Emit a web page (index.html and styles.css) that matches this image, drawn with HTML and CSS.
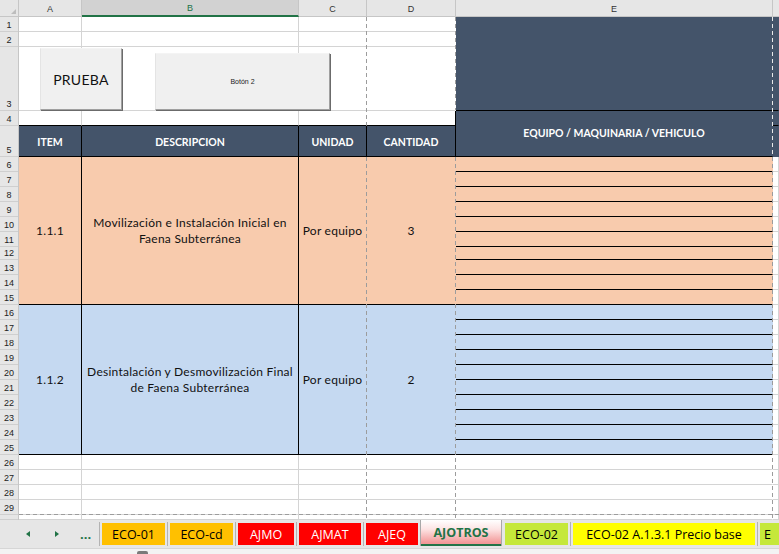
FILE: index.html
```html
<!DOCTYPE html>
<html lang="es">
<head>
<meta charset="utf-8">
<title>AJOTROS</title>
<link rel="stylesheet" href="styles.css">
</head>
<body>
<div class="app">
  <div class="colhead">
    <div class="corner"></div>
    <div class="ch w-a">A</div>
    <div class="ch w-b sel">B</div>
    <div class="ch w-c">C</div>
    <div class="ch w-d">D</div>
    <div class="ch w-e">E</div>
    <div class="ch w-f"></div>
  </div>
  <div class="body">
    <div class="rownums">
      <div class="rn">1</div><div class="rn">2</div><div class="rn">3</div><div class="rn">4</div><div class="rn">5</div>
      <div class="rn">6</div><div class="rn">7</div><div class="rn">8</div><div class="rn">9</div><div class="rn">10</div>
      <div class="rn">11</div><div class="rn">12</div><div class="rn">13</div><div class="rn">14</div><div class="rn">15</div>
      <div class="rn">16</div><div class="rn">17</div><div class="rn">18</div><div class="rn">19</div><div class="rn">20</div>
      <div class="rn">21</div><div class="rn">22</div><div class="rn">23</div><div class="rn">24</div><div class="rn">25</div>
      <div class="rn">26</div><div class="rn">27</div><div class="rn">28</div><div class="rn">29</div><div class="rn"></div>
    </div>
    <div class="grid">
      <!-- row 1 -->
      <div class="c"></div><div class="c"></div><div class="c nr"></div><div class="c nr"></div>
      <div class="c dk s3 bk-b"></div><div class="c dk s3 bk-b"></div>
      <!-- row 2 -->
      <div class="c"></div><div class="c"></div><div class="c nr"></div><div class="c nr"></div>
      <!-- row 3 -->
      <div class="c"></div><div class="c"></div><div class="c nr"></div><div class="c nr"></div>
      <!-- row 4 -->
      <div class="c bk-b"></div><div class="c bk-b"></div><div class="c nr bk-b"></div><div class="c bk-b bk-r"></div>
      <div class="c dk s2 bk-b eqhead">EQUIPO / MAQUINARIA / VEHICULO</div>
      <div class="c dk bk-b"></div>
      <!-- row 5 -->
      <div class="c hd">ITEM</div><div class="c hd">DESCRIPCION</div><div class="c hd">UNIDAD</div><div class="c hd">CANTIDAD</div>
      <div class="c dk"></div>
      <!-- rows 6-15 -->
      <div class="c pe s10 bk-r bk-b txt">1.1.1</div>
      <div class="c pe s10 bk-r bk-b txt desc">Movilización e Instalación Inicial en<br>Faena Subterránea</div>
      <div class="c pe s10 nr bk-b txt">Por equipo</div>
      <div class="c pe s10 nr bk-b txt">3</div>
      <div class="c pe nr bk-b"></div><div class="c"></div>
      <div class="c pe nr bk-b"></div><div class="c"></div>
      <div class="c pe nr bk-b"></div><div class="c"></div>
      <div class="c pe nr bk-b"></div><div class="c"></div>
      <div class="c pe nr bk-b"></div><div class="c"></div>
      <div class="c pe nr bk-b"></div><div class="c"></div>
      <div class="c pe nr bk-b"></div><div class="c"></div>
      <div class="c pe nr bk-b"></div><div class="c"></div>
      <div class="c pe nr bk-b"></div><div class="c"></div>
      <div class="c pe nr bk-b"></div><div class="c"></div>
      <!-- rows 16-25 -->
      <div class="c bl s10 bk-r bk-b txt">1.1.2</div>
      <div class="c bl s10 bk-r bk-b txt desc">Desintalación y Desmovilización Final<br>de Faena Subterránea</div>
      <div class="c bl s10 nr bk-b txt">Por equipo</div>
      <div class="c bl s10 nr bk-b txt">2</div>
      <div class="c bl nr bk-b"></div><div class="c"></div>
      <div class="c bl nr bk-b"></div><div class="c"></div>
      <div class="c bl nr bk-b"></div><div class="c"></div>
      <div class="c bl nr bk-b"></div><div class="c"></div>
      <div class="c bl nr bk-b"></div><div class="c"></div>
      <div class="c bl nr bk-b"></div><div class="c"></div>
      <div class="c bl nr bk-b"></div><div class="c"></div>
      <div class="c bl nr bk-b"></div><div class="c"></div>
      <div class="c bl nr bk-b"></div><div class="c"></div>
      <div class="c bl nr bk-b"></div><div class="c"></div>
      <!-- rows 26-30 -->
      <div class="c"></div><div class="c"></div><div class="c nr"></div><div class="c nr"></div><div class="c nr"></div><div class="c"></div>
      <div class="c"></div><div class="c"></div><div class="c nr"></div><div class="c nr"></div><div class="c nr"></div><div class="c"></div>
      <div class="c"></div><div class="c"></div><div class="c nr"></div><div class="c nr"></div><div class="c nr"></div><div class="c"></div>
      <div class="c"></div><div class="c"></div><div class="c nr"></div><div class="c nr"></div><div class="c nr"></div><div class="c"></div>
      <div class="c"></div><div class="c"></div><div class="c nr"></div><div class="c nr"></div><div class="c nr"></div><div class="c"></div>

      <!-- page break lines -->
      <div class="pb pb-c1"></div><div class="pb pb-c2"></div>
      <div class="pb pb-d1"></div><div class="pb pb-d2"></div>
      <div class="pb pb-e1"></div><div class="pb pb-e2"></div>
      <div class="pb pb-h"></div>

      <!-- form buttons -->
      <div class="btn btn-prueba">PRUEBA</div>
      <div class="btn btn-2">Botón 2</div>
    </div>
  </div>
  <div class="tabbar">
    <div class="nav">
      <span class="arrow arrow-l"></span>
      <span class="arrow arrow-r"></span>
      <span class="dots">...</span>
    </div>
    <span class="sep"></span>
    <div class="tab t-or w63">ECO-01</div>
    <span class="sep"></span>
    <div class="tab t-or w63">ECO-cd</div>
    <span class="sep"></span>
    <div class="tab t-red w56">AJMO</div>
    <span class="sep"></span>
    <div class="tab t-red w62">AJMAT</div>
    <span class="sep"></span>
    <div class="tab t-red w52">AJEQ</div>
    <div class="tab active">AJOTROS</div>
    <div class="tab t-lime w63">ECO-02</div>
    <span class="sep"></span>
    <div class="tab t-yel w182">ECO-02 A.1.3.1 Precio base</div>
    <span class="sep"></span>
    <div class="tab t-lime t-last">E</div>
  </div>
  <div class="status"><span class="sicon"></span></div>
</div>
</body>
</html>
```

FILE: styles.css
```css
* { box-sizing: border-box; margin: 0; padding: 0; }
html, body { width: 779px; height: 554px; overflow: hidden; background: #fff; }
body { font-family: "Lato", "Liberation Sans", sans-serif; }

.app { display: flex; flex-direction: column; width: 779px; height: 554px; }

/* column header */
.colhead { display: flex; height: 17px; background: #e6e6e6; flex: none; }
.corner { width: 19px; border-right: 1px solid #c6c6c6; border-bottom: 1px solid #c6c6c6; position: relative; }
.corner::after { content: ""; position: absolute; right: 2px; bottom: 2px; border-left: 5px solid transparent; border-bottom: 5px solid #bdbdbd; }
.ch { border-right: 1px solid #c6c6c6; border-bottom: 1px solid #c6c6c6; font: 9px "Liberation Sans", sans-serif; color: #333; display: flex; align-items: center; justify-content: center; padding-top: 1px; }
.ch.sel { background: #d2d2d2; color: #217346; border-bottom: 2px solid #217346; }
.w-a { width: 63px; } .w-b { width: 217px; } .w-c { width: 68px; } .w-d { width: 89px; } .w-e { width: 317px; } .w-f { flex: 1; border-right: none; }

/* body */
.body { display: flex; height: 503px; flex: none; }
.rownums, .grid {
  display: grid;
  grid-template-rows: 15px 15px 64px 15px 31px repeat(6, 15px) 13px repeat(3, 15px) repeat(14, 15px) 5px;
}
.rownums { width: 19px; background: #e6e6e6; border-right: 1px solid #c6c6c6; }
.rn { border-bottom: 1px solid #cfcfcf; font: 9px "Liberation Sans", sans-serif; color: #222; display: flex; align-items: flex-end; justify-content: center; padding-bottom: 1px; }

.grid { position: relative; flex: 1; grid-template-columns: 63px 217px 68px 89px 317px 1fr; background: #fff; }
.c { border-right: 1px solid #d4d4d4; border-bottom: 1px solid #d4d4d4; min-width: 0; }
.nr { border-right-color: transparent; }
.s2 { grid-row: span 2; } .s3 { grid-row: span 3; } .s10 { grid-row: span 10; }

.dk { background: #44546a; border-right-color: transparent; border-bottom-color: transparent; }
.pe { background: #f8cbad; border-right-color: transparent; border-bottom-color: transparent; }
.bl { background: #c5d9f1; border-right-color: transparent; border-bottom-color: transparent; }
.hd { background: #44546a; border-right: 1px solid #000; border-bottom: 1px solid #000; color: #fff; font-weight: 700; font-size: 10.5px; display: flex; align-items: center; justify-content: center; padding-top: 1px; }
.eqhead { color: #fff; font-weight: 700; font-size: 10.5px; display: flex; align-items: center; justify-content: center; padding-bottom: 1px; }
.txt { display: flex; align-items: center; justify-content: center; text-align: center; font-size: 12px; letter-spacing: 0.25px; color: #111; line-height: 16px; }

.bk-b { border-bottom: 1px solid #000; }
.bk-r { border-right: 1px solid #000; }

/* page break dashed lines */
.pb { position: absolute; width: 1px; background: repeating-linear-gradient(to bottom, #9c9c9c 0 4px, transparent 4px 7px); }
.pb-c1 { left: 347px; top: 0; height: 108px; }
.pb-c2 { left: 347px; top: 140px; bottom: 0; }
.pb-d1 { left: 436px; top: 0; height: 93px; }
.pb-d2 { left: 436px; top: 140px; bottom: 0; }
.pb-e1 { left: 753px; top: 0; height: 140px; background: repeating-linear-gradient(to bottom, #e9e9e9 0 4px, transparent 4px 7px); }
.pb-e2 { left: 753px; top: 140px; bottom: 0; }
.pb-h { left: 0; right: 0; top: 497px; height: 1px; width: auto; background: repeating-linear-gradient(to right, #9c9c9c 0 4px, transparent 4px 7px); }

/* form buttons */
.btn { position: absolute; background: #f0f0f0; border-top: 1px solid #f4f4f4; border-left: 1px solid #e4e4e4; border-right: 1px solid #a0a0a0; border-bottom: 1px solid #a0a0a0; box-shadow: 1px 1px 0 #6b6b6b; display: flex; align-items: center; justify-content: center; color: #000; }
.btn-prueba { left: 21px; top: 31px; width: 82px; height: 62px; font: 14px "Lato", sans-serif; letter-spacing: 0.3px; color: #111; }
.btn-2 { left: 136px; top: 36px; width: 175px; height: 57px; font: 7px "Liberation Sans", sans-serif; color: #222; }

/* tab bar */
.tabbar { height: 28px; flex: none; background: #e6e6e6; display: flex; align-items: flex-start; font-family: "Open Sans", sans-serif; font-size: 12.5px; overflow: hidden; white-space: nowrap; }
.nav { width: 99px; height: 28px; position: relative; flex: none; }
.arrow { position: absolute; top: 11px; width: 0; height: 0; border-top: 3.5px solid transparent; border-bottom: 3.5px solid transparent; }
.arrow-l { left: 26px; border-right: 4px solid #217346; }
.arrow-r { left: 55px; border-left: 4px solid #217346; }
.dots { position: absolute; left: 80px; top: 5px; color: #217346; font-weight: 700; font-size: 13px; letter-spacing: 0; }
.sep { width: 1px; height: 24px; margin-top: 2px; background: #b3b3b3; flex: none; }
.tab { height: 22px; margin: 3px 2px 0; display: flex; align-items: center; justify-content: center; flex: none; color: #000; }
.w63 { width: 63px; } .w56 { width: 56px; } .w62 { width: 62px; } .w52 { width: 52px; } .w182 { width: 182px; }
.t-or { background: #ffc000; }
.t-red { background: #ff0000; color: #fff; }
.t-lime { background: #c5e83a; }
.t-yel { background: #ffff00; }
.t-last { width: 30px; justify-content: flex-start; padding-left: 4px; margin-right: 0; }
.tab.active { width: 82px; height: 26px; margin: 0 1px 0 0; border-left: 1px solid #a8a8a8; border-right: 1px solid #a8a8a8; background: linear-gradient(to bottom, #ffffff 0%, #fde4e4 35%, #f29898 88%); box-shadow: inset 0 -2px 0 #217346; color: #217346; font-weight: 700; padding-bottom: 2px; }

.status { height: 6px; flex: none; background: #f3f3f3; border-top: 1px solid #d6d6d6; position: relative; }
.sicon { position: absolute; left: 137px; top: 2px; width: 11px; height: 3px; background: #7a7a7a; border-radius: 2px 2px 0 0; }
```
